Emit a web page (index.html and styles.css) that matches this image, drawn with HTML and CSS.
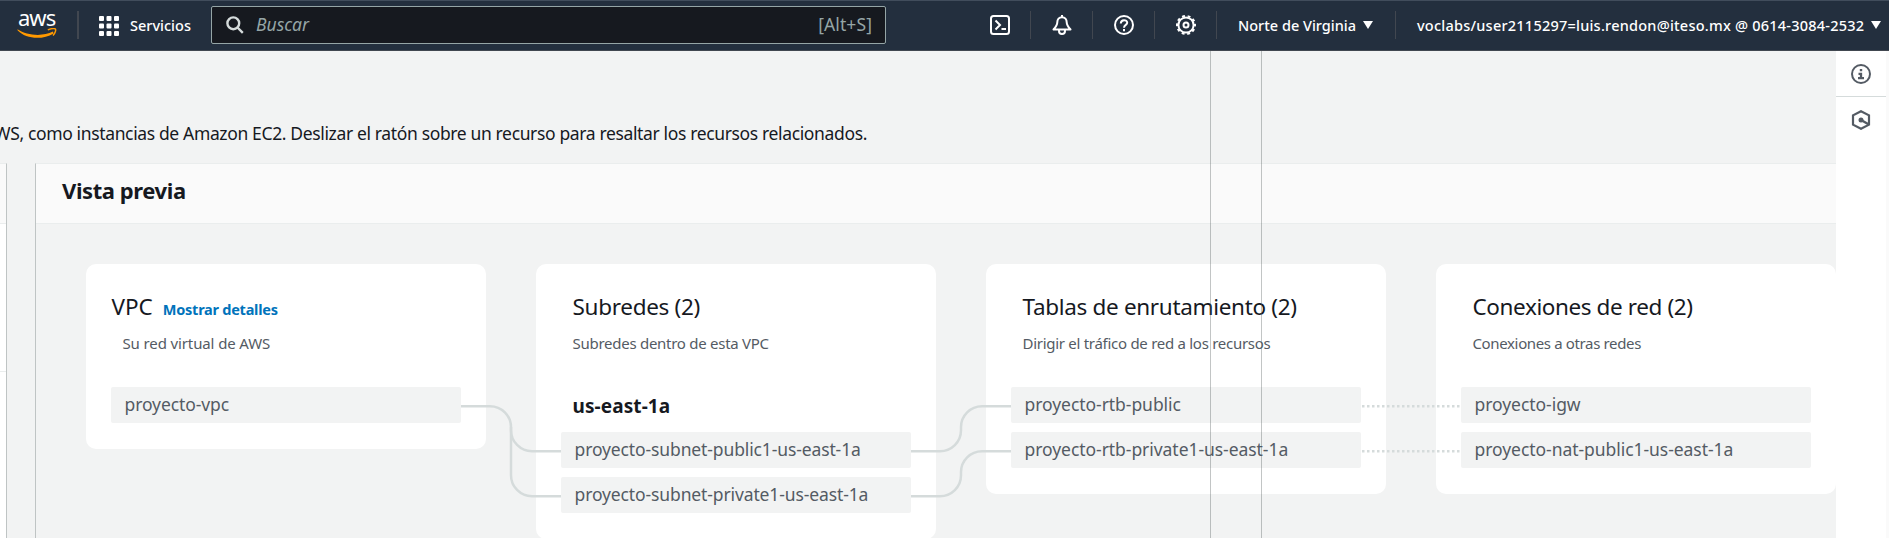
FILE: index.html
```html
<!DOCTYPE html>
<html lang="es">
<head>
<meta charset="utf-8">
<title>Vista previa</title>
<link rel="stylesheet" href="styles.css">
</head>
<body>
<header class="topbar">
  <div class="brand">
    <span class="brand-text">aws</span>
    <svg class="smile" width="40" height="11" viewBox="0 0 40 11"><path d="M0.500 1.200C10 7.500 25 9 36 3.600L36.500 5.400C26 12 9 11.500 0.500 2.300Z" fill="#f90"/><path d="M30.800 1.900C34 .6 37.600.3 38.400 1C39.200 2 37.900 5.600 36 7.600" fill="none" stroke="#f90" stroke-width="1.500"/></svg>
  </div>
  <button class="services">
    <svg width="20" height="20" viewBox="0 0 20 20" fill="#fff"><rect width="5" height="5" rx="1"/><rect x="7.500" width="5" height="5" rx="1"/><rect x="15" width="5" height="5" rx="1"/><rect y="7.500" width="5" height="5" rx="1"/><rect x="7.500" y="7.500" width="5" height="5" rx="1"/><rect x="15" y="7.500" width="5" height="5" rx="1"/><rect y="15" width="5" height="5" rx="1"/><rect x="7.500" y="15" width="5" height="5" rx="1"/><rect x="15" y="15" width="5" height="5" rx="1"/></svg>
    <span>Servicios</span>
  </button>
  <div class="search">
    <svg width="18" height="18" viewBox="0 0 18 18" fill="none" stroke="#d5dbdb" stroke-width="2.400"><circle cx="7.300" cy="7.300" r="5.900"/><path d="M11.500 11.500L16.800 16.800"/></svg>
    <span class="placeholder">Buscar</span>
    <span class="shortcut">[Alt+S]</span>
  </div>
  <nav class="tools">
    <div class="tool"><svg width="20" height="20" viewBox="0 0 20 20" fill="none" stroke="#fff" stroke-width="2"><rect x="1" y="1" width="18" height="18" rx="2.500"/><path d="M5.500 5.500L10 10L5.500 14.500M11.500 14H16"/></svg></div>
    <div class="tool"><svg width="20" height="20" viewBox="0 0 20 20" fill="none" stroke="#fff" stroke-width="2" stroke-linejoin="round"><path d="M10 0V2M10 2.200C7 2.200 5.300 4.500 5.300 7.200C5.300 10 4 11.800 1.500 14.500H18.500C16 11.800 14.700 10 14.700 7.200C14.700 4.500 13 2.200 10 2.200Z"/><path d="M7 14.500V16A3 3 0 0 0 13 16V14.500"/></svg></div>
    <div class="tool"><svg width="20" height="20" viewBox="0 0 20 20" fill="none" stroke="#fff" stroke-width="2"><circle cx="10" cy="10" r="9"/><path d="M6.800 8.500C6.800 4.200 13.200 4.200 13.200 7.800C13.200 10 10 9.800 10 12.800M10 14V16.200"/></svg></div>
    <div class="tool"><svg width="20" height="20" viewBox="0 0 20 20" fill="none" stroke="#fff" stroke-width="2"><circle cx="10" cy="10" r="7.600"/><circle cx="10" cy="10" r="9" stroke-dasharray="2.900 2.755" stroke-dashoffset="1.450"/><circle cx="10" cy="10" r="2.500"/></svg></div>
  </nav>
  <div class="region"><span>Norte de Virginia</span><i class="caret"></i></div>
  <div class="account"><span class="account-name">voclabs/user2115297=luis.rendon@iteso.mx @ 0614-3084-2532</span><i class="caret"></i></div>
</header>
<div class="shell">
  <main class="main">
    <div class="intro"><p>AWS, como instancias de Amazon EC2. Deslizar el ratón sobre un recurso para resaltar los recursos relacionados.</p></div>
    <div class="columns">
      <section class="settings"><div class="settings-head"></div><div class="settings-block"></div></section>
      <section class="preview">
        <div class="preview-head"><h2>Vista previa</h2></div>
        <div class="map">
          <article class="card vpc">
            <div class="card-head"><h3>VPC</h3><a>Mostrar detalles</a></div>
            <p class="sub">Su red virtual de AWS</p>
            <div class="node">proyecto-vpc</div>
          </article>
          <article class="card subnets">
            <div class="card-head shifted"><h3>Subredes (2)</h3></div>
            <p class="sub">Subredes dentro de esta VPC</p>
            <h4 class="zone">us-east-1a</h4>
            <div class="node">proyecto-subnet-public1-us-east-1a</div>
            <div class="node">proyecto-subnet-private1-us-east-1a</div>
          </article>
          <article class="card routes">
            <div class="card-head shifted"><h3>Tablas de enrutamiento (2)</h3></div>
            <p class="sub">Dirigir el tráfico de red a los recursos</p>
            <div class="node">proyecto-rtb-public</div>
            <div class="node">proyecto-rtb-private1-us-east-1a</div>
          </article>
          <article class="card networks">
            <div class="card-head shifted"><h3>Conexiones de red (2)</h3></div>
            <p class="sub">Conexiones a otras redes</p>
            <div class="node">proyecto-igw</div>
            <div class="node">proyecto-nat-public1-us-east-1a</div>
          </article>
          <svg class="links" width="1800" height="314" viewBox="36 224 1800 314" fill="none" stroke="#d5dbdb" stroke-width="2.500">
            <path d="M461 406.200H490A21 21 0 0 1 511 427.200V430A21 21 0 0 0 532 451.200H561"/>
            <path d="M511 427V475A21 21 0 0 0 532 496.200H561"/>
            <path d="M911 451.200H940A21 21 0 0 0 961 430.200V427.200A21 21 0 0 1 982 406.200H1011"/>
            <path d="M911 496.200H940A21 21 0 0 0 961 475.200V472.200A21 21 0 0 1 982 451.200H1011"/>
            <path d="M1362 406.200H1461M1362 451.200H1461" stroke-dasharray="2.500 2.500"/>
          </svg>
        </div>
      </section>
    </div>
    <div class="guide guide-a"></div>
    <div class="guide guide-b"></div>
  </main>
  <aside class="rail">
    <div class="rail-item"><svg width="20" height="20" viewBox="0 0 20 20" fill="none" stroke="#545b64" stroke-width="2"><circle cx="10" cy="10" r="9"/><path d="M8.800 6.200H11.200M7.500 9.800H10V14M7 14.200H13" stroke-width="2.300"/></svg></div>
    <div class="rail-item"><svg width="20" height="20" viewBox="0 0 20 20" fill="none" stroke="#545b64" stroke-width="2.200"><path d="M10 1.200L18 5.400V14.600L10 18.800L2 14.600V5.400Z"/><circle cx="10" cy="10" r="2.500" fill="#545b64" stroke="none"/><path d="M10 10L17.500 14.300" stroke-width="2.400"/></svg></div>
  </aside>
</div>
</body>
</html>
```
FILE: styles.css
```css
* { box-sizing: border-box; margin: 0; padding: 0; }
body { width: 1889px; height: 538px; overflow: hidden; background: #f2f3f3; color: #16191f; font-family: "Noto Sans", sans-serif; font-size: 17.5px; white-space: nowrap; }
h2, h3, h4 { font-weight: 400; }
svg { display: block; flex: none; }

/* Top navigation */
.topbar { display: flex; height: 51px; background: #232f3e; border-top: 1px solid #414d5c; border-bottom: 1px solid #414750; color: #fff; font-size: 14.5px; font-weight: 500; }
.brand { width: 79px; margin-top: 10px; height: 28px; padding-left: 17px; border-right: 2px solid #414750; }
.brand-text { display: block; height: 17px; line-height: 13px; padding-left: 1px; font-size: 22px; font-weight: 400; letter-spacing: -1px; }
.services { display: flex; align-items: center; gap: 11px; width: 132px; padding-left: 20px; background: none; border: 0; color: inherit; font: inherit; }
.services span { margin-top: -1px; }
.search { display: flex; align-items: center; width: 675px; height: 38px; margin-top: 5px; padding: 0 13px 0 14px; background: #16191f; border: 1px solid #95a5a6; border-radius: 2px; font-size: 17.5px; font-weight: 400; color: #95a5a6; }
.placeholder { margin: -2px 0 0 12px; font-style: italic; }
.shortcut { margin: -2px 0 0 auto; letter-spacing: 0.1px; }
.tools { display: flex; margin-left: 83px; padding-top: 10px; }
.tool { width: 62px; height: 28px; padding: 4px 0 0 21px; border-right: 1px solid #414750; }
.region { display: flex; align-items: center; width: 179px; height: 28px; margin-top: 10px; padding-left: 21px; gap: 7px; border-right: 1px solid #414750; }
.account { display: flex; align-items: center; height: 28px; margin-top: 10px; padding-left: 21px; gap: 7px; }
.account-name { letter-spacing: 0.23px; }
.caret { border: 5px solid transparent; border-top: 8px solid #fff; border-bottom: 0; }

/* Page */
.shell { display: flex; height: 487px; }
.main { position: relative; width: 1836px; overflow: hidden; }
.intro { display: flex; justify-content: flex-end; width: 867px; height: 112px; padding-top: 70px; line-height: 24px; letter-spacing: -0.36px; }
.intro p { flex: none; }
.columns { display: flex; gap: 28px; height: 375px; }
.settings { width: 7px; border-top: 1px solid #eaeded; border-right: 1px solid #bfc4c4; background: #fff; }
.settings-head { height: 60px; background: #fafafa; border-bottom: 1px solid #eaeded; }
.settings-block { height: 148px; border-bottom: 1px solid #eaeded; }
.preview { width: 1801px; border-top: 1px solid #eaeded; border-left: 1px solid #bfc4c4; }
.preview-head { display: flex; align-items: center; height: 60px; padding: 0 0 7px 26px; background: #fafafa; border-bottom: 1px solid #eaeded; }
.preview-head h2 { font-size: 22px; font-weight: 700; letter-spacing: -0.42px; }

/* Resource map */
.map { position: relative; display: flex; align-items: flex-start; gap: 50px; height: 314px; padding: 40px 0 0 50px; }
.card { flex: none; width: 400px; padding: 24px 25px 26px; background: #fff; border-radius: 10px; }
.card-head { display: flex; align-items: baseline; height: 40px; line-height: 38px; font-size: 15px; }
.card-head h3 { font-size: 22.5px; }
.vpc .card-head { padding-left: 0.5px; }
.card-head a { margin-left: 10px; color: #0073bb; font-size: 14.5px; font-weight: 700; letter-spacing: -0.25px; }
.shifted, .sub { padding-left: 11.5px; }
.sub { height: 59px; line-height: 30px; font-size: 15px; color: #545b64; }
.zone { height: 45px; padding-left: 11.5px; line-height: 39px; font-size: 19px; font-weight: 700; letter-spacing: 0.1px; }
.node { height: 36px; padding-left: 13.5px; line-height: 35px; background: #f2f3f3; border-radius: 2px; color: #545b64; }
.node + .node { margin-top: 9px; }
.vpc .sub { letter-spacing: -0.12px; }
.vpc .node { letter-spacing: -0.1px; }
.subnets h3 { letter-spacing: -0.3px; }
.subnets .sub { letter-spacing: -0.27px; }
.subnets .node { letter-spacing: -0.12px; }
.routes h3 { letter-spacing: -0.32px; }
.routes .sub { letter-spacing: -0.28px; }
.networks h3 { letter-spacing: -0.4px; }
.networks .sub { letter-spacing: -0.36px; }
.networks .node, .routes .node { letter-spacing: -0.05px; }
.links { position: absolute; left: 0; top: 0; }
.guide { position: absolute; top: 0; width: 1px; height: 487px; background: rgba(80, 90, 90, .35); }
.guide-a { left: 1210px; }
.guide-b { left: 1261px; }

/* Help rail */
.rail { width: 53px; background: #fff; border-right: 3px solid #fafafa; }
.rail-item { height: 46px; padding: 13px 0 0 15px; border-bottom: 1px solid #d5dbdb; }
.rail-item + .rail-item { border: 0; }
```
